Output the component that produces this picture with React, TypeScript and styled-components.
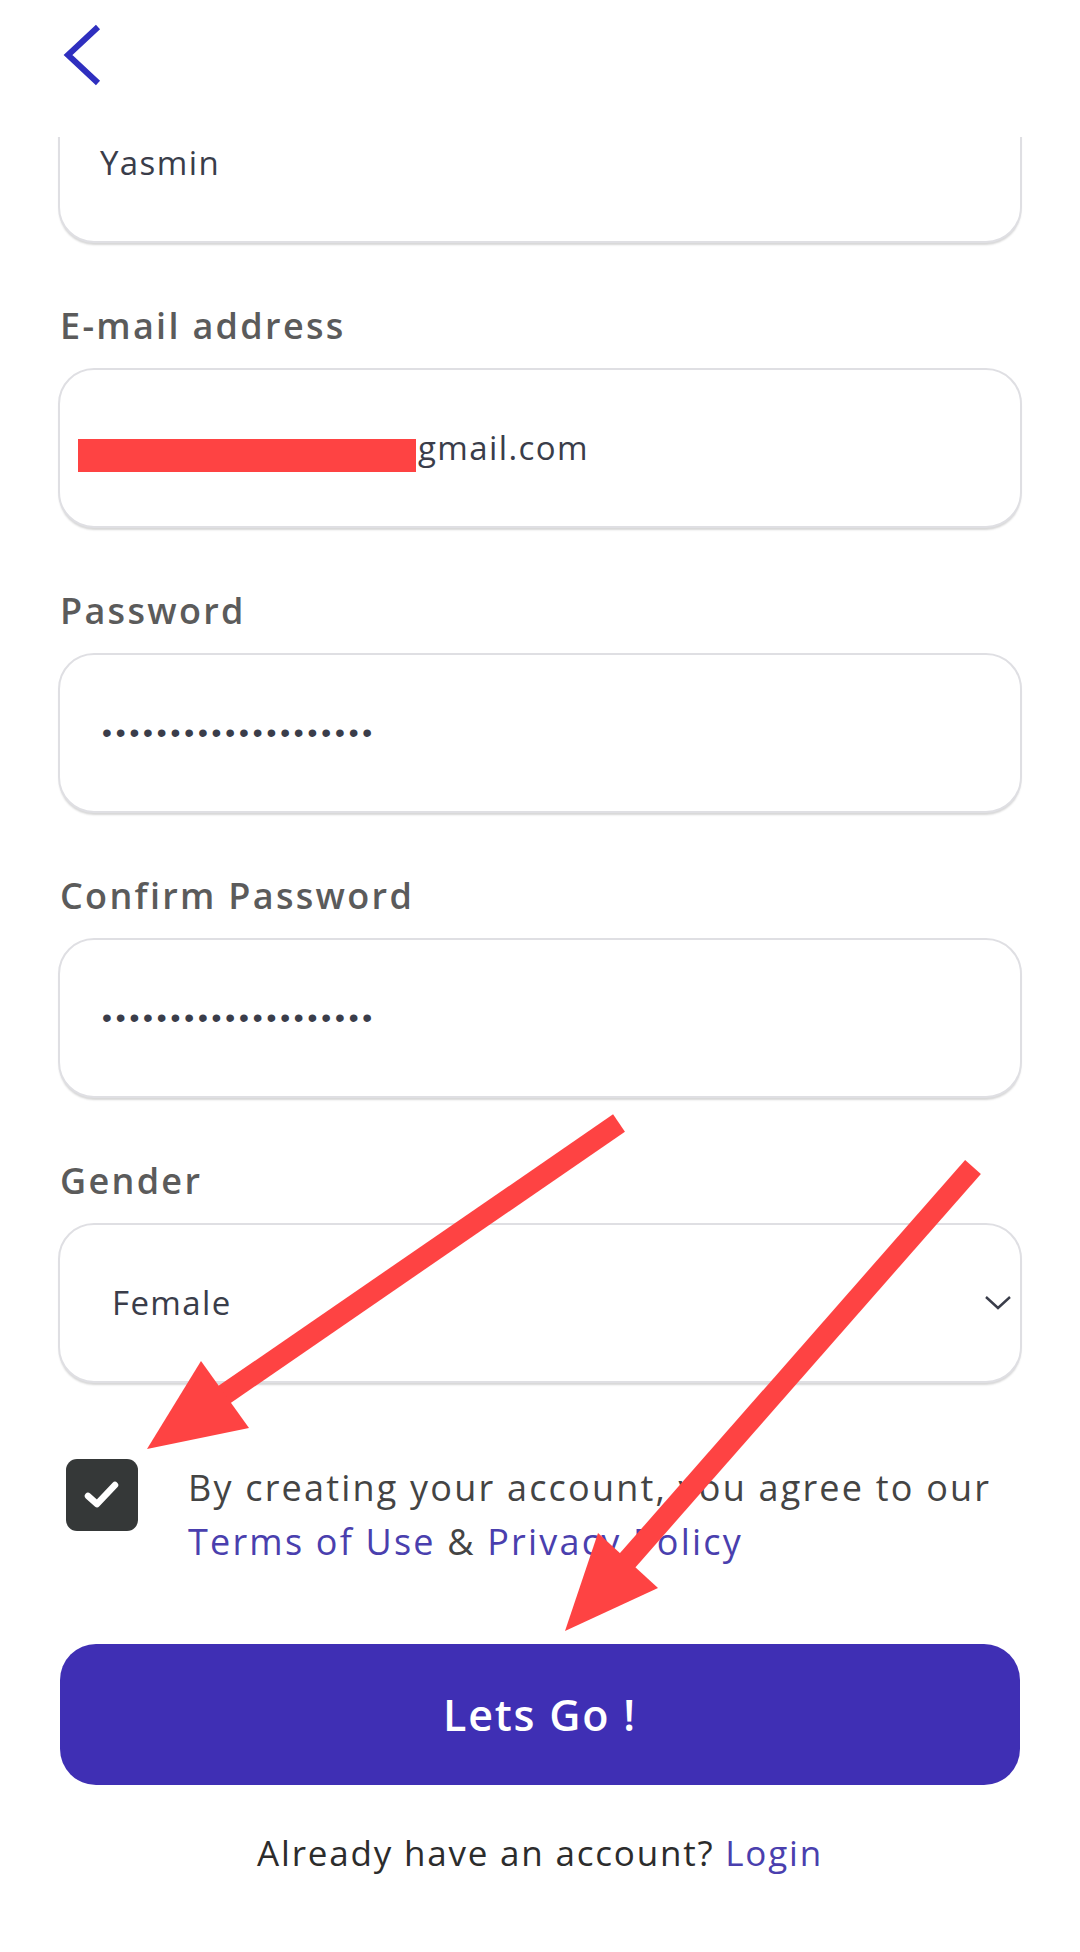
import React from "react";
import styled, { createGlobalStyle } from "styled-components";

const GlobalStyle = createGlobalStyle`
    body {
        margin: 0;
        background: #ffffff;
        font-family: "Open Sans", "Noto Sans", sans-serif;
    }
`;

function BackIcon() {
    return (
        <svg width="40" height="64" viewBox="0 0 40 64">
            <polyline
                points="35,3 5,31 35,59"
                fill="none"
                stroke="#2f2fbf"
                strokeWidth="6"
            />
        </svg>
    );
}

function ChevronDown() {
    return (
        <svg width="28" height="16" viewBox="0 0 28 16">
            <polyline
                points="2,2 14,13 26,2"
                fill="none"
                stroke="#3a3d4a"
                strokeWidth="2.4"
            />
        </svg>
    );
}

function CheckIcon() {
    return (
        <svg width="40" height="32" viewBox="0 0 40 32">
            <polyline
                points="6,17 15,25 33,6"
                fill="none"
                stroke="#ffffff"
                strokeWidth="6.5"
                strokeLinecap="round"
                strokeLinejoin="round"
            />
        </svg>
    );
}

// red markup drawn on top of the screenshot
function Annotations() {
    return (
        <Overlay width="1080" height="1952" viewBox="0 0 1080 1952">
            <line x1="619" y1="1123" x2="215" y2="1401" stroke="#fe4343" strokeWidth="21" />
            <polygon points="147,1449 201,1361 249,1428" fill="#fe4343" />
            <line x1="973" y1="1167" x2="620" y2="1569" stroke="#fe4343" strokeWidth="21" />
            <polygon points="565,1631 598,1533 658,1588" fill="#fe4343" />
        </Overlay>
    );
}

const PASSWORD = "••••••••••••••••••••";

function App() {
    return (
        <Page>
            <GlobalStyle />
            <Header>
                <BackButton aria-label="back">
                    <BackIcon />
                </BackButton>
            </Header>
            <Viewport>
                <Form>
                    <InputBox $scrolled>
                        <Value>Yasmin</Value>
                    </InputBox>

                    <Field>
                        <Label>E-mail address</Label>
                        <InputBox>
                            <Value>
                                <Redacted />
                                gmail.com
                            </Value>
                        </InputBox>
                    </Field>

                    <Field>
                        <Label>Password</Label>
                        <InputBox>
                            <Dots>{PASSWORD}</Dots>
                        </InputBox>
                    </Field>

                    <Field>
                        <Label>Confirm Password</Label>
                        <InputBox>
                            <Dots>{PASSWORD}</Dots>
                        </InputBox>
                    </Field>

                    <Field>
                        <Label>Gender</Label>
                        <InputBox $select>
                            <Value>Female</Value>
                            <ChevronDown />
                        </InputBox>
                    </Field>

                    <TermsRow>
                        <CheckBox>
                            <CheckIcon />
                        </CheckBox>
                        <TermsText>
                            By creating your account, you agree to our{" "}
                            <Link>Terms of Use</Link> &amp; <Link>Privacy Policy</Link>
                        </TermsText>
                    </TermsRow>

                    <SubmitButton>Lets Go !</SubmitButton>

                    <Footer>
                        Already have an account? <Link>Login</Link>
                    </Footer>
                </Form>
            </Viewport>
            <Annotations />
        </Page>
    );
}

export default App;


const Page = styled.div`
    position: relative;
    width: 1080px;
    height: 1952px;
    overflow: hidden;
    background: #ffffff;
`;

const Header = styled.div`
    height: 137px;
    padding: 24px 0 0 63px;
    box-sizing: border-box;
`;

const BackButton = styled.div`
    width: 40px;
    height: 64px;
`;

const Viewport = styled.div`
    overflow: hidden;
    padding: 0 58px 4px;
`;

const Form = styled.div`
    display: flex;
    flex-direction: column;
`;

const Field = styled.div`
    display: flex;
    flex-direction: column;
    margin-top: 58px;
`;

const Label = styled.div`
    font-size: 36px;
    font-weight: 600;
    letter-spacing: 2.3px;
    line-height: 50px;
    color: #5b5b5b;
    margin: 0 0 17px 2px;
`;

const InputBox = styled.div<{ $select?: boolean; $scrolled?: boolean }>`
    height: 160px;
    box-sizing: border-box;
    border: 2px solid #dfdfe3;
    border-radius: 36px;
    box-shadow: 0 3px 2px -1px rgba(0, 0, 0, 0.16);
    display: flex;
    align-items: center;
    justify-content: space-between;
    padding: ${(p) => (p.$select ? "0 8px 0 52px" : "0 40px")};
    margin-top: ${(p) => (p.$scrolled ? "-54px" : "0")};
    background: #ffffff;
`;

const Value = styled.div`
    font-size: 33px;
    letter-spacing: 1.4px;
    color: #3a3d4a;
    line-height: 40px;
    display: flex;
    align-items: center;
`;

const Redacted = styled.span`
    display: inline-block;
    width: 338px;
    height: 33px;
    margin: 14px 2px 0 -22px;
    background: #fe4343;
`;

const Dots = styled.div`
    font-family: "Liberation Sans", sans-serif;
    font-size: 28px;
    letter-spacing: 3.9px;
    color: #3a3d4a;
    margin-left: 2px;
`;

const TermsRow = styled.div`
    display: flex;
    align-items: flex-start;
    margin-top: 76px;
    padding-left: 8px;
`;

const CheckBox = styled.div`
    flex: none;
    width: 72px;
    height: 72px;
    border-radius: 11px;
    background: #353838;
    display: flex;
    align-items: center;
    justify-content: center;
`;

const TermsText = styled.p`
    margin: 2px 0 0 50px;
    font-size: 36px;
    letter-spacing: 2.2px;
    line-height: 54px;
    color: #444444;
`;

const Link = styled.span`
    color: #4a3fae;
`;

const SubmitButton = styled.button`
    margin: 75px 2px 0;
    height: 141px;
    border: none;
    border-radius: 36px;
    background: #3f2fb4;
    color: #ffffff;
    font-family: "Open Sans", "Noto Sans", sans-serif;
    font-size: 43px;
    font-weight: 600;
    letter-spacing: 1.8px;
`;

const Footer = styled.div`
    margin-top: 43px;
    text-align: center;
    font-size: 35px;
    letter-spacing: 1.8px;
    line-height: 50px;
    color: #2c2c2c;
`;

const Overlay = styled.svg`
    position: absolute;
    top: 0;
    left: 0;
    pointer-events: none;
`;
